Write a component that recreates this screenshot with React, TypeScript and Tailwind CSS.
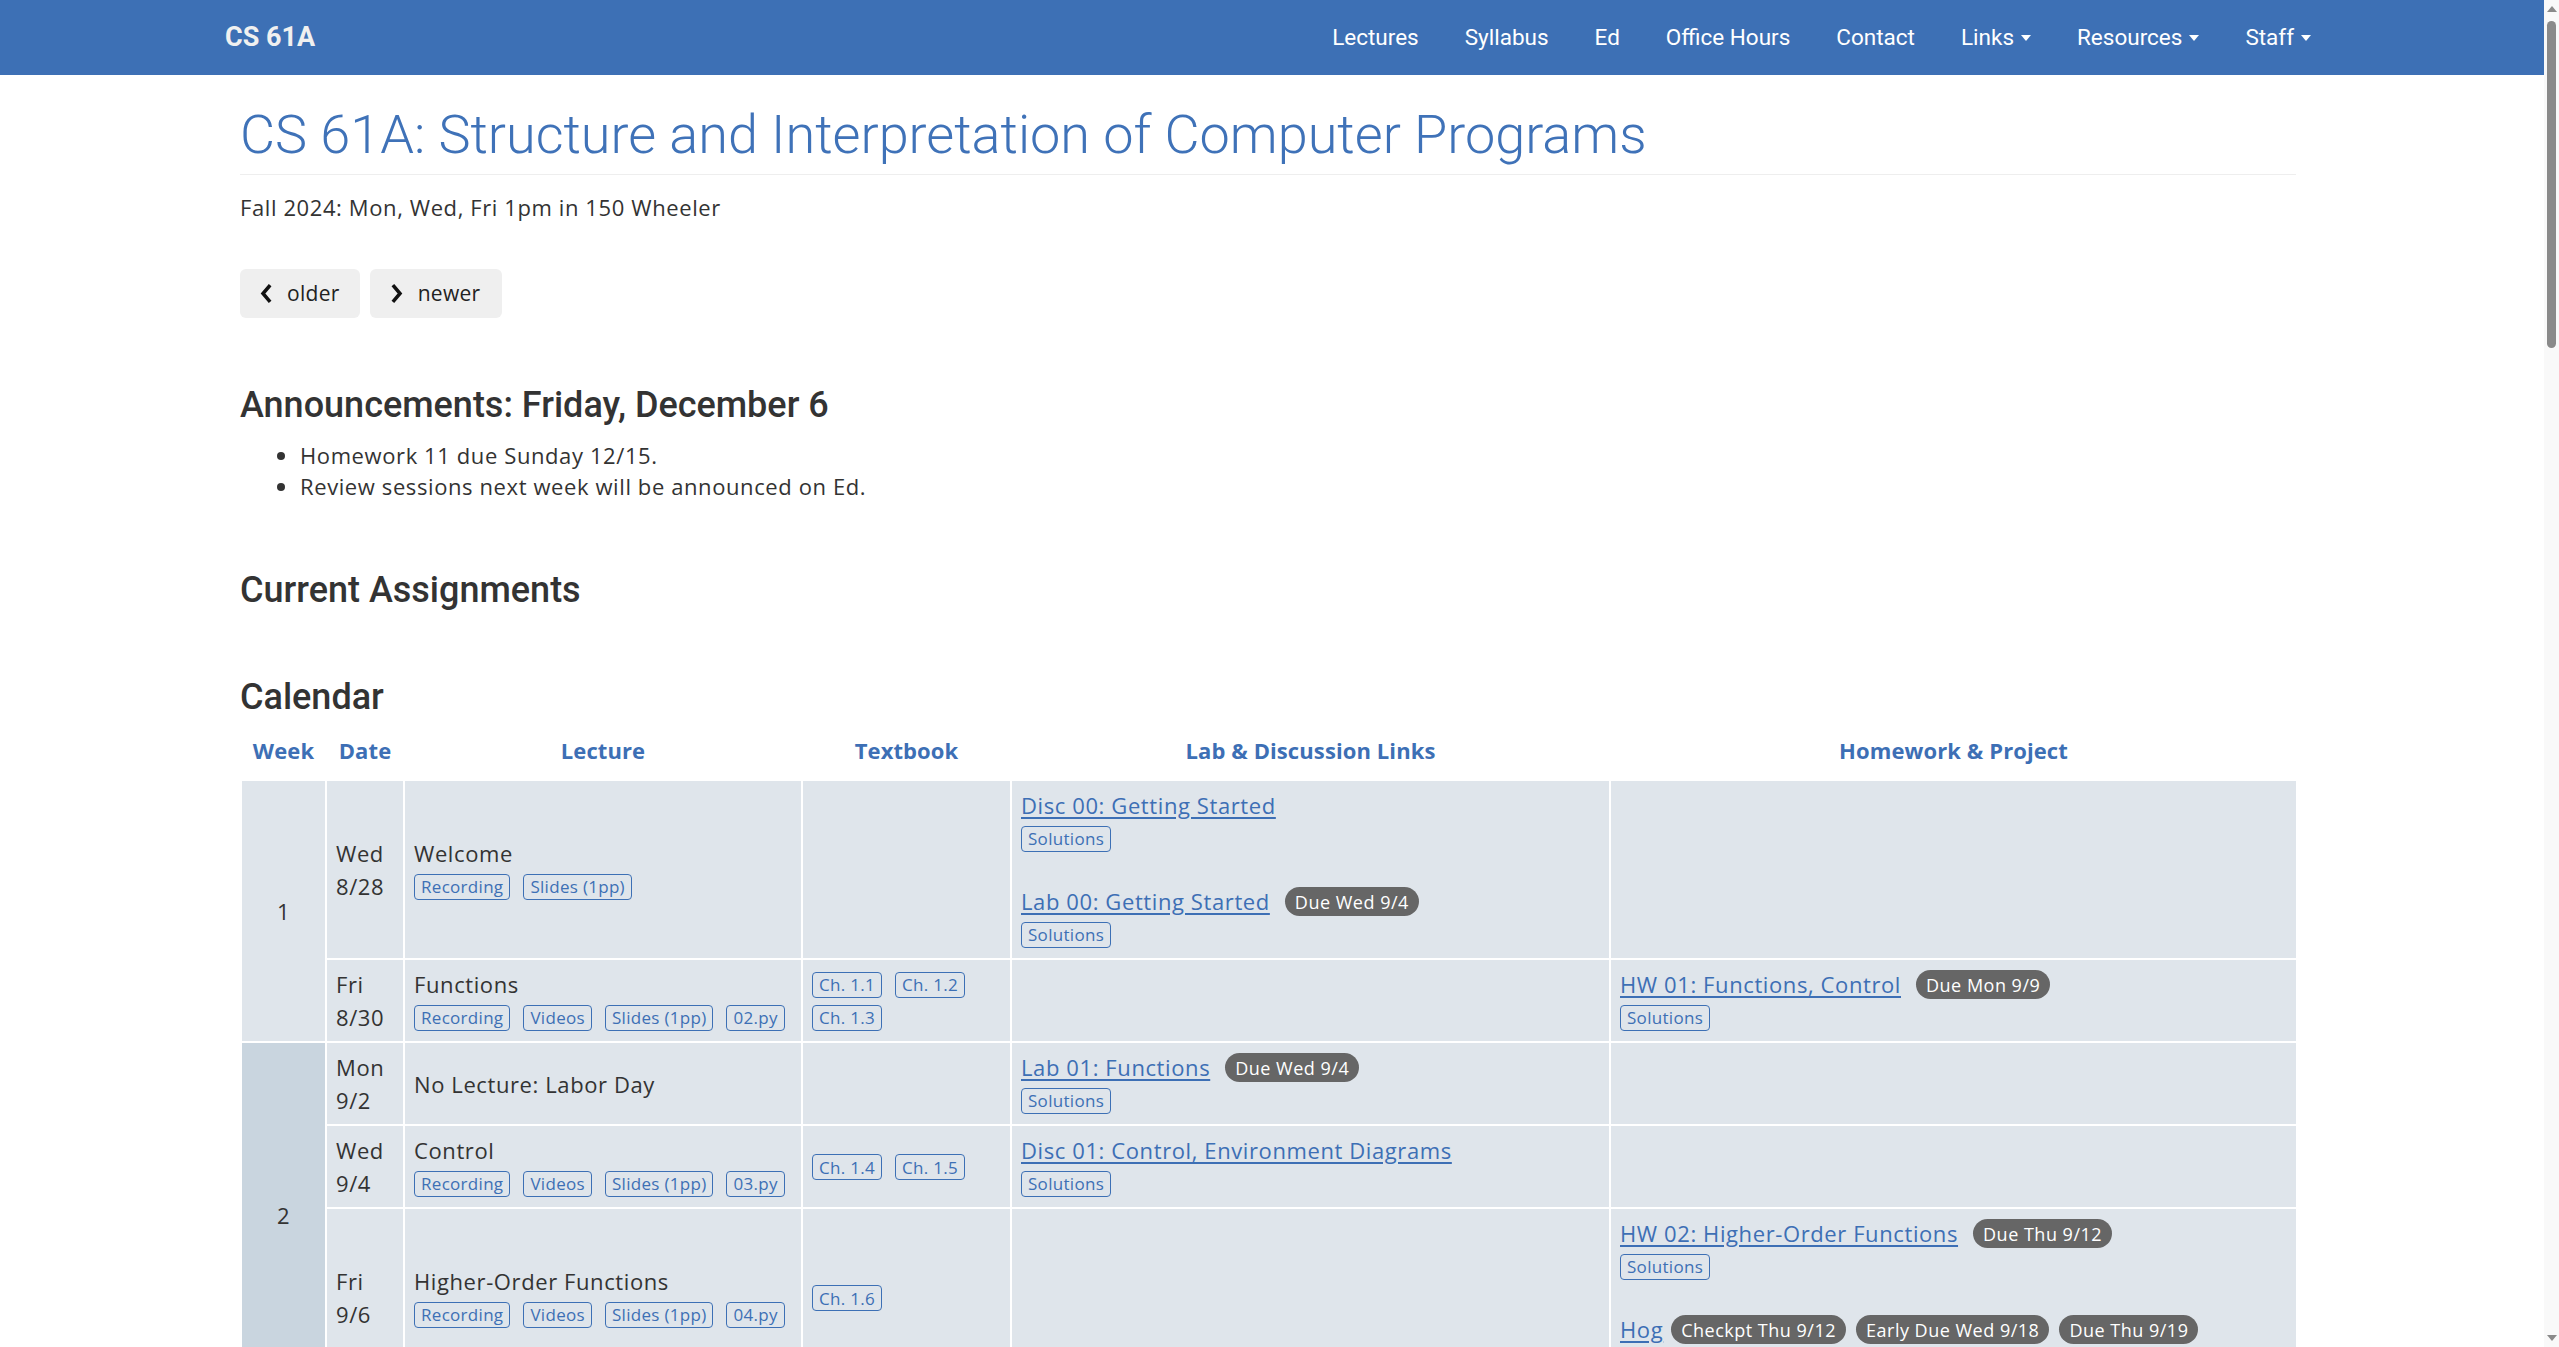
type Item = { label: string; due?: string[]; sol?: boolean; tight?: boolean };
type Row = {
  day: string;
  date: string;
  title: string;
  plain?: boolean;
  num?: number;
  book?: string[];
  lab?: Item[];
  hw?: Item[];
};
type Week = { n: number; rows: Row[] };

const NAV = ["Lectures", "Syllabus", "Ed", "Office Hours", "Contact"];
const DROPDOWNS = ["Links", "Resources", "Staff"];

const WEEKS: Week[] = [
  {
    n: 1,
    rows: [
      {
        day: "Wed",
        date: "8/28",
        title: "Welcome",
        lab: [
          { label: "Disc 00: Getting Started", sol: true },
          { label: "Lab 00: Getting Started", due: ["Due Wed 9/4"], sol: true },
        ],
      },
      {
        day: "Fri",
        date: "8/30",
        title: "Functions",
        num: 2,
        book: ["Ch. 1.1", "Ch. 1.2", "Ch. 1.3"],
        hw: [{ label: "HW 01: Functions, Control", due: ["Due Mon 9/9"], sol: true }],
      },
    ],
  },
  {
    n: 2,
    rows: [
      {
        day: "Mon",
        date: "9/2",
        title: "No Lecture: Labor Day",
        plain: true,
        lab: [{ label: "Lab 01: Functions", due: ["Due Wed 9/4"], sol: true }],
      },
      {
        day: "Wed",
        date: "9/4",
        title: "Control",
        num: 3,
        book: ["Ch. 1.4", "Ch. 1.5"],
        lab: [{ label: "Disc 01: Control, Environment Diagrams", sol: true }],
      },
      {
        day: "Fri",
        date: "9/6",
        title: "Higher-Order Functions",
        num: 4,
        book: ["Ch. 1.6"],
        hw: [
          { label: "HW 02: Higher-Order Functions", due: ["Due Thu 9/12"], sol: true },
          { label: "Hog", due: ["Checkpt Thu 9/12", "Early Due Wed 9/18", "Due Thu 9/19"], sol: true, tight: true },
        ],
      },
    ],
  },
];

// the rest of the term, below the fold
const LATER: [string, string, string, string][][] = [
  [["Mon", "9/9", "Environments", "Ch. 1.6"], ["Wed", "9/11", "Design", "Ch. 1.6"], ["Fri", "9/13", "Function Examples", "Ch. 1.6"]],
  [["Mon", "9/16", "Recursion", "Ch. 1.7"], ["Wed", "9/18", "Tree Recursion", "Ch. 1.7"], ["Fri", "9/20", "Sequences", "Ch. 2.3"]],
  [["Mon", "9/23", "Containers", "Ch. 2.3"], ["Wed", "9/25", "Data Abstraction", "Ch. 2.2"], ["Fri", "9/27", "Trees", "Ch. 2.3"]],
  [["Mon", "9/30", "Mutability", "Ch. 2.4"], ["Wed", "10/2", "Iterators", "Ch. 4.2"], ["Fri", "10/4", "Generators", "Ch. 4.2"]],
  [["Mon", "10/7", "Objects", "Ch. 2.5"], ["Wed", "10/9", "Inheritance", "Ch. 2.5"], ["Fri", "10/11", "Representation", "Ch. 2.7"]],
  [["Mon", "10/14", "Composition", "Ch. 2.9"], ["Wed", "10/16", "Efficiency", "Ch. 2.8"], ["Fri", "10/18", "Decomposition", "Ch. 2.8"]],
  [["Mon", "10/21", "Scheme", "Ch. 3.1"], ["Wed", "10/23", "Exceptions", "Ch. 3.3"], ["Fri", "10/25", "Calculator", "Ch. 3.4"]],
  [["Mon", "10/28", "Interpreters", "Ch. 3.5"], ["Wed", "10/30", "Tail Calls", "Ch. 3.5"], ["Fri", "11/1", "Programs as Data", "Ch. 3.5"]],
  [["Mon", "11/4", "Macros", "Ch. 3.5"], ["Wed", "11/6", "SQL", "Ch. 4.3"], ["Fri", "11/8", "Tables", "Ch. 4.3"]],
  [["Mon", "11/11", "No Lecture: Veterans Day", ""], ["Wed", "11/13", "Aggregation", "Ch. 4.3"], ["Fri", "11/15", "Databases", "Ch. 4.3"]],
  [["Mon", "11/18", "Designing Functions", ""], ["Wed", "11/20", "Review", ""], ["Fri", "11/22", "Calculator Review", ""]],
];

let lecNum = 5;
let labNum = 2;
let discNum = 2;
let hwNum = 3;
LATER.forEach((wk, wi) => {
  const rows: Row[] = wk.map(([day, date, title, ch], i) => {
    const plain = title.startsWith("No Lecture");
    const row: Row = { day, date, title, plain, book: ch ? [ch] : [] };
    if (!plain) row.num = lecNum++;
    if (i === 0) row.lab = [{ label: `Lab ${String(labNum++).padStart(2, "0")}: ${title}`, due: [`Due Wed ${wk[1][1]}`], sol: true }];
    if (i === 1) row.lab = [{ label: `Disc ${String(discNum++).padStart(2, "0")}: ${title}`, sol: true }];
    if (i === 2 && wi % 2 === 0) row.hw = [{ label: `HW ${String(hwNum++).padStart(2, "0")}: ${title}`, due: [`Due Thu ${wk[1][1]}`], sol: true }];
    return row;
  });
  WEEKS.push({ n: wi + 3, rows });
});

const cell = "border-2 border-white px-[9px] pt-[8px] pb-[7px] align-middle";

function Tag({ children }: { children: React.ReactNode }) {
  return (
    <span className="flex h-[33px] items-center">
      <a className="inline-flex h-[26px] items-center rounded-[4px] border border-[#3d70b5] px-[6px] text-[17px] leading-none tracking-[0.3px] text-[#3d70b5]">
        {children}
      </a>
    </span>
  );
}

function Pill({ children, className }: { children: React.ReactNode; className?: string }) {
  return (
    <span
      className={
        "inline-flex h-[29px] items-center rounded-full bg-[#666] px-[10px] text-[18px] font-medium leading-none tracking-[0.5px] text-white " +
        (className ?? "")
      }
    >
      {children}
    </span>
  );
}

function Entry({ item }: { item: Item }) {
  return (
    <div className="mt-[30px] first:mt-0">
      <div className="flex min-h-[33px] flex-wrap items-center">
        <a className="cursor-pointer text-[#3d6fb5] underline underline-offset-[3px]">{item.label}</a>
        {(item.due ?? []).map((d, i) => (
          <Pill key={d} className={i === 0 ? (item.tight ? "ml-[8px]" : "ml-[15px]") : "ml-[10px]"}>
            {d}
          </Pill>
        ))}
      </div>
      {item.sol && (
        <div className="flex">
          <Tag>Solutions</Tag>
        </div>
      )}
    </div>
  );
}

function Chevron({ dir }: { dir: "left" | "right" }) {
  return (
    <svg width="12" height="19" viewBox="0 0 12 19" fill="none" stroke="#111" strokeWidth="3.5" strokeLinecap="square">
      {dir === "left" ? <path d="M9 2.5 3 9.5l6 7" /> : <path d="M3 2.5 9 9.5l-6 7" />}
    </svg>
  );
}

function Calendar() {
  return (
    <table className="w-[2056px] table-fixed border-collapse text-[22px] leading-[33px] tracking-[0.6px] text-[#333]">
      <colgroup>
        <col className="w-[85px]" />
        <col className="w-[78px]" />
        <col className="w-[398px]" />
        <col className="w-[209px]" />
        <col className="w-[599px]" />
        <col className="w-[687px]" />
      </colgroup>
      <thead>
        <tr className="text-[22px] font-bold tracking-[0.1px] text-[#3d6fb5]">
          {["Week", "Date", "Lecture", "Textbook", "Lab & Discussion Links", "Homework & Project"].map((h) => (
            <th key={h} className="px-[4px] pt-[12px] pb-[12px] text-center">
              {h}
            </th>
          ))}
        </tr>
      </thead>
      <tbody>
        {WEEKS.map((wk) =>
          wk.rows.map((r, i) => (
            <tr key={wk.n + r.date} className="bg-[#dfe5eb]">
              {i === 0 && (
                <td rowSpan={wk.rows.length} className={cell + " text-center " + (wk.n % 2 === 0 ? "bg-[#c9d5df]" : "bg-[#dfe5eb]")}>
                  {wk.n}
                </td>
              )}
              <td className={cell}>
                {r.day}
                <br />
                {r.date}
              </td>
              <td className={cell}>
                <div>{r.title}</div>
                {!r.plain && (
                  <div className="flex flex-wrap gap-x-[13px]">
                    <Tag>Recording</Tag>
                    {r.num !== undefined && <Tag>Videos</Tag>}
                    <Tag>Slides (1pp)</Tag>
                    {r.num !== undefined && <Tag>{String(r.num).padStart(2, "0")}.py</Tag>}
                  </div>
                )}
              </td>
              <td className={cell}>
                <div className="flex flex-wrap gap-x-[13px]">
                  {(r.book ?? []).map((b) => (
                    <Tag key={b}>{b}</Tag>
                  ))}
                </div>
              </td>
              <td className={cell}>
                {(r.lab ?? []).map((it) => (
                  <Entry key={it.label} item={it} />
                ))}
              </td>
              <td className={cell}>
                {(r.hw ?? []).map((it) => (
                  <Entry key={it.label} item={it} />
                ))}
              </td>
            </tr>
          ))
        )}
      </tbody>
    </table>
  );
}

function ScrollBar() {
  return (
    <div className="fixed top-0 right-0 flex h-screen w-[15px] flex-col items-center bg-[#f9f9f9]">
      <span className="mt-[6px] h-0 w-0 border-x-[5px] border-b-[6px] border-x-transparent border-b-[#8a8a8a]" />
      <span className="mt-[9px] h-[327px] w-[9px] rounded-full bg-[#8a8a8a]" />
      <span className="mt-auto mb-[6px] h-0 w-0 border-x-[5px] border-t-[6px] border-x-transparent border-t-[#8a8a8a]" />
    </div>
  );
}

export default function App() {
  return (
    <div className="min-h-screen bg-white font-['Open_Sans',sans-serif] text-[#333]">
      <div className="mr-[15px]">
        <nav className="h-[75px] bg-[#3d70b5] font-['Roboto',sans-serif]">
          <div className="mx-auto flex h-full w-[2124px] items-center justify-between">
            <a className="pl-[15px] text-[27px] font-bold text-[#f0f0f0]">CS 61A</a>
            <ul className="flex items-center text-[22.5px] text-white">
              {NAV.map((n) => (
                <li key={n} className="px-[23px]">
                  {n}
                </li>
              ))}
              {DROPDOWNS.map((n) => (
                <li key={n} className="flex items-center px-[23px]">
                  {n}
                  <span className="ml-[7px] inline-block h-0 w-0 border-x-[5px] border-t-[6px] border-x-transparent border-t-white" />
                </li>
              ))}
            </ul>
          </div>
        </nav>

        <main className="mx-auto w-[2064px] pr-[8px] pb-[60px] text-[22px] tracking-[0.6px]">
          <div className="border-b border-[#eee] pt-[30px] pb-[10px] tracking-normal">
            <h1 className="font-['Roboto',sans-serif] text-[54px] leading-[59px] font-light text-[#3f72b8]">
              CS 61A: Structure and Interpretation of Computer Programs
            </h1>
          </div>
          <p className="mt-[16px] leading-[33px]">Fall 2024: Mon, Wed, Fri 1pm in 150 Wheeler</p>

          <div className="mt-[45px] flex gap-[10px] text-[21px] tracking-[0.3px] text-[#222]">
            <button className="flex h-[49px] items-center gap-[15px] rounded-[6px] bg-[#efefef] px-[20px]">
              <Chevron dir="left" />
              older
            </button>
            <button className="flex h-[49px] items-center gap-[15px] rounded-[6px] bg-[#efefef] px-[21px]">
              <Chevron dir="right" />
              newer
            </button>
          </div>

          <h2 className="mt-[67px] font-['Roboto',sans-serif] text-[36px] leading-[40px] font-medium tracking-normal text-[#333]">
            Announcements: Friday, December 6
          </h2>
          <ul className="mt-[15px] list-disc pl-[60px] leading-[31px]">
            <li>Homework 11 due Sunday 12/15.</li>
            <li>Review sessions next week will be announced on Ed.</li>
          </ul>

          <h2 className="mt-[68px] font-['Roboto',sans-serif] text-[36px] leading-[40px] font-medium tracking-normal text-[#333]">
            Current Assignments
          </h2>

          <h2 className="mt-[67px] font-['Roboto',sans-serif] text-[36px] leading-[40px] font-medium tracking-normal text-[#333]">
            Calendar
          </h2>
          <div className="mt-[5px]">
            <Calendar />
          </div>
        </main>
      </div>
      <ScrollBar />
    </div>
  );
}
